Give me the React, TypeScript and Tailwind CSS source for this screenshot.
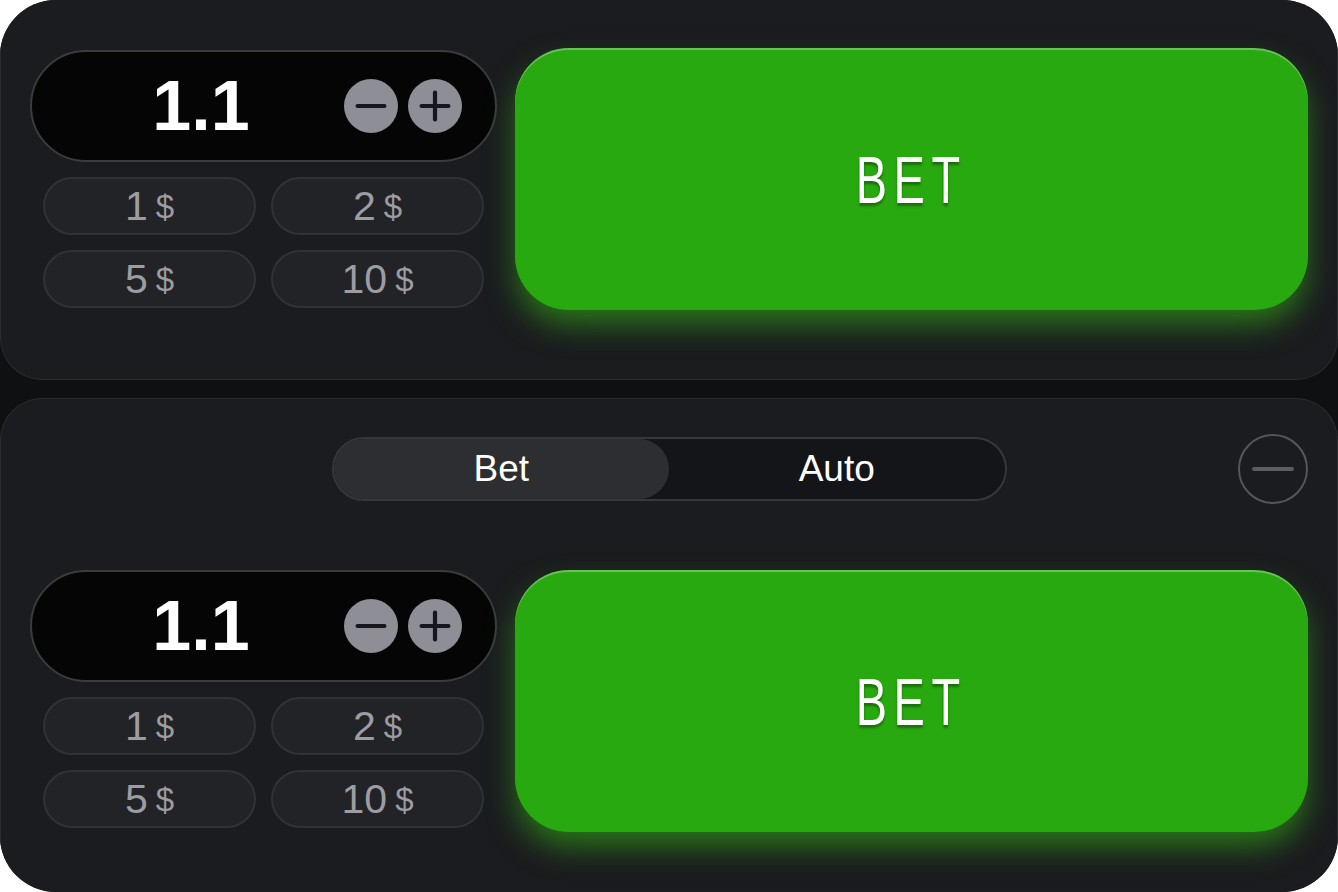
import { Minus, Plus } from 'lucide-react'

const quickAmounts = ['1', '2', '5', '10']

function AmountInput() {
  return (
    <div className="flex h-[112px] items-center rounded-full border-2 border-[#3a3b3e] bg-[#050505] pr-[33px]">
      <div className="flex-1 pl-[26px] text-center font-['Liberation_Sans',Arial,sans-serif] text-[70px] font-bold leading-none text-white">
        1.1
      </div>
      <div className="flex items-center gap-[10px]">
        <button className="flex h-[54px] w-[54px] items-center justify-center rounded-full bg-[#8e8e97]">
          <Minus size={46} strokeWidth={2.2} color="#16161c" />
        </button>
        <button className="flex h-[54px] w-[54px] items-center justify-center rounded-full bg-[#8e8e97]">
          <Plus size={46} strokeWidth={2.2} color="#16161c" />
        </button>
      </div>
    </div>
  )
}

function QuickButtons() {
  return (
    <div className="mx-[13px] grid grid-cols-2 gap-[15px]">
      {quickAmounts.map((a) => (
        <button
          key={a}
          className="flex h-[58px] items-center justify-center rounded-full border-2 border-[#313235] bg-[#222327] font-['Liberation_Sans',Arial,sans-serif] text-[#9c9ca1]"
        >
          <span className="text-[41px] leading-none">{a}</span>
          <span className="ml-[8px] text-[33px] leading-none">$</span>
        </button>
      ))}
    </div>
  )
}

function BetRow({ offset }: { offset: boolean }) {
  return (
    <div className="flex items-start gap-[18px] px-[29px]">
      <div className={`flex w-[467px] flex-col gap-[15px] ${offset ? 'mt-[2px]' : ''}`}>
        <AmountInput />
        <QuickButtons />
      </div>
      <button className="flex h-[262px] flex-1 items-center justify-center rounded-[54px] bg-[#28a90f] shadow-[inset_0_2px_0_rgba(255,255,255,0.3),0_16px_30px_-2px_rgba(55,210,20,0.5)]">
        <span className="inline-block scale-x-[0.7] font-['Liberation_Sans',Arial,sans-serif] text-[67px] leading-none tracking-[0.14em] text-white [text-shadow:0_3px_3px_rgba(0,0,0,0.35)]">
          BET
        </span>
      </button>
    </div>
  )
}

export default function App() {
  return (
    <div className="h-[892px] w-[1338px] bg-white">
      <div className="flex h-full flex-col gap-[18px] overflow-hidden rounded-[56px] bg-[#0f1012]">
        {/* Top panel */}
        <div className="h-[380px] shrink-0 rounded-b-[42px] border border-t-0 border-[#2c2d30] bg-[#1b1c1f] pt-[48px]">
          <BetRow offset />
        </div>

        {/* Bottom panel */}
        <div className="flex-1 rounded-t-[42px] border border-b-0 border-[#2c2d30] bg-[#1b1c1f] pt-[35px]">
          <div className="grid grid-cols-[1fr_auto_1fr] items-center px-[29px]">
            <div />
            <div className="flex h-[64px] w-[675px] rounded-full border-2 border-[#36373a] bg-[#141518] font-['Liberation_Sans',Arial,sans-serif] text-[37px] text-white">
              <div className="flex flex-1 items-center justify-center rounded-full bg-[#2d2e32]">Bet</div>
              <div className="flex flex-1 items-center justify-center">Auto</div>
            </div>
            <div className="flex justify-end">
              <button className="flex h-[70px] w-[70px] items-center justify-center rounded-full border-2 border-[#55565a]">
                <span className="h-[4px] w-[42px] rounded-full bg-[#5c5d61]" />
              </button>
            </div>
          </div>
          <div className="mt-[66px]">
            <BetRow offset={false} />
          </div>
        </div>
      </div>
    </div>
  )
}
